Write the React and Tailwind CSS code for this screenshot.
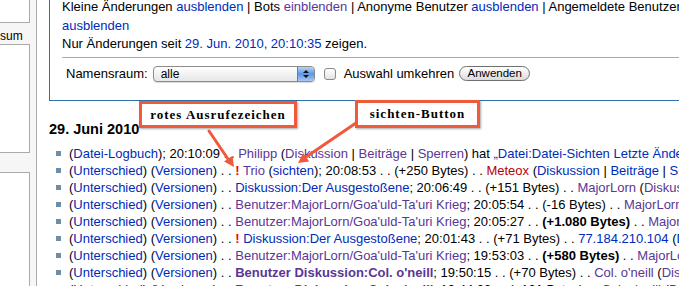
import React from "react";

// link colours (monobook)
const B = ({ children, className = "" }) => (
  <span className={`text-[#002bb8] ${className}`}>{children}</span>
);
const V = ({ children, className = "" }) => (
  <span className={`text-[#5a3696] ${className}`}>{children}</span>
);
const R = ({ children }) => <span className="text-[#ba0000]">{children}</span>;
const Bang = () => <span className="font-bold text-[#ff0000]">!</span>;

function Row({ children }) {
  return (
    <li className="flex items-start h-[17px]">
      <span className="mt-[6px] ml-[19px] mr-[8px] h-[5px] w-[5px] shrink-0 bg-[#6f8ea6]" />
      <span className="whitespace-nowrap">{children}</span>
    </li>
  );
}

const Diff = () => (
  <>
    (<B>Unterschied</B>) (<B>Versionen</B>) . .{" "}
  </>
);

function Sidebar() {
  return (
    <div className="w-[36px] shrink-0 bg-[#f6f6f6]">
      <div className="h-[23px] w-[30px] border-r border-b border-[#aaa] bg-white" />
      <div className="h-[21px] pt-[6px] text-[12px] leading-[14px] text-black">sum</div>
      <div className="h-[109px] w-[30px] border-t border-r border-b border-[#aaa] bg-white" />
      <div className="mt-[19px] h-[140px] w-[30px] border-t border-r border-[#aaa] bg-white" />
    </div>
  );
}

function Filters() {
  return (
    <div className="w-[700px] border-l border-b border-[#2f6fab] pl-[12px] pb-[18px]">
      <div className="-mt-[2px] leading-[18.5px] whitespace-nowrap">
        <div>
          Kleine Änderungen <B>ausblenden</B> | Bots <V>einblenden</V> | Anonyme
          Benutzer <B>ausblenden</B> | Angemeldete Benutzer
        </div>
        <div>
          <B>ausblenden</B>
        </div>
        <div>
          Nur Änderungen seit <B>29. Jun. 2010, 20:10:35</B> zeigen.
        </div>
      </div>
      <div className="mt-[3px] h-px bg-[#aaa]" />
      <div className="mt-[8px] flex items-center pl-[4px] h-[16px] whitespace-nowrap">
        <span>Namensraum:</span>
        <div className="ml-[5px] flex h-[16px] w-[162px] overflow-hidden rounded-[4px] border border-[#8c8c8c] bg-linear-to-b from-white to-[#e6e6e6] shadow-[0_1px_1px_rgba(0,0,0,0.15)]">
          <span className="flex-1 pl-[7px] text-[12px] leading-[15px]">alle</span>
          <span className="flex w-[17px] flex-col items-center justify-center gap-[2px] border-l border-[#5a7fb8] bg-linear-to-b from-[#b9d3f5] via-[#5d95e3] to-[#a9c8f3]">
            <svg width="6" height="3" viewBox="0 0 6 3">
              <path d="M0 3 L3 0 L6 3 Z" fill="#111" />
            </svg>
            <svg width="6" height="3" viewBox="0 0 6 3">
              <path d="M0 0 L3 3 L6 0 Z" fill="#111" />
            </svg>
          </span>
        </div>
        <span className="ml-[9px] h-[12px] w-[12px] rounded-[3px] border border-[#8a8a8a] bg-linear-to-b from-white to-[#e4e4e4]" />
        <span className="ml-[8px]">Auswahl umkehren</span>
        <span className="ml-[5px] flex h-[15px] w-[71px] items-center justify-center rounded-full border border-[#707070] bg-linear-to-b from-white to-[#dcdcdc] text-[11.5px] leading-[13px]">
          Anwenden
        </span>
      </div>
    </div>
  );
}

function Changes() {
  return (
    <ul className="-ml-[12px] mt-[6px] leading-[17px]">
      <Row>
        (<B>Datei-Logbuch</B>); 20:10:09 . . <V>Philipp</V> (<V>Diskussion</V> |{" "}
        <V>Beiträge</V> | <V>Sperren</V>) hat{" "}
        <B>„Datei:Datei-Sichten Letzte Änderungen.png“</B> hochgeladen
      </Row>
      <Row>
        <Diff />
        <Bang /> <V>Trio</V> (<B>sichten</B>); 20:08:53 . . (+250 Bytes) . .{" "}
        <R>Meteox</R> (<B>Diskussion</B> | <B>Beiträge</B> | <B>Sperren</B>)
      </Row>
      <Row>
        <Diff />
        <B>Diskussion:Der Ausgestoßene</B>; 20:06:49 . . (+151 Bytes) . .{" "}
        <V>MajorLorn</V> (<V>Diskussion</V> | <V>Beiträge</V>)
      </Row>
      <Row>
        <Diff />
        <V>Benutzer:MajorLorn/Goa'uld-Ta'uri Krieg</V>; 20:05:54 . . (-16 Bytes) . .{" "}
        <V>MajorLorn</V> (<V>Diskussion</V>)
      </Row>
      <Row>
        <Diff />
        <V>Benutzer:MajorLorn/Goa'uld-Ta'uri Krieg</V>; 20:05:27 . .{" "}
        <b>(+1.080 Bytes)</b> . . <V>MajorLorn</V> (<V>Diskussion</V>)
      </Row>
      <Row>
        <Diff />
        <Bang /> <B>Diskussion:Der Ausgestoßene</B>; 20:01:43 . . (+71 Bytes) . .{" "}
        <B>77.184.210.104</B> (<B>Diskussion</B>)
      </Row>
      <Row>
        <Diff />
        <V>Benutzer:MajorLorn/Goa'uld-Ta'uri Krieg</V>; 19:53:03 . .{" "}
        <b>(+580 Bytes)</b> . . <V>MajorLorn</V> (<V>Diskussion</V>)
      </Row>
      <Row>
        <Diff />
        <V className="font-bold">Benutzer Diskussion:Col. o'neill</V>; 19:50:15 . . (+70
        Bytes) . . <V>Col. o'neill</V> (<V>Diskussion</V>)
      </Row>
      <Row>
        <Diff />
        <V className="font-bold">Benutzer Diskussion:Col. o'neill</V>; 19:44:03 . . (+101
        Bytes) . . <V>Col. o'neill</V> (<V>Diskussion</V>)
      </Row>
    </ul>
  );
}

function Callout({ className, children }) {
  return (
    <div
      className={`absolute flex items-center justify-center border-[3px] border-[#ef5a3c] bg-white font-['Liberation_Serif',serif] text-[13px] font-bold tracking-[1px] text-black shadow-[1px_1px_2px_rgba(0,0,0,0.35)] ${className}`}
    >
      {children}
    </div>
  );
}

export default function App() {
  return (
    <div className="relative flex h-[286px] w-[679px] overflow-hidden bg-white font-['Liberation_Sans',Arial,sans-serif] text-[13px] text-black">
      <Sidebar />
      <div className="flex-1 border-l border-[#aaa] bg-white pl-[12px]">
        <Filters />
        <h2 className="mt-[18px] text-[14.5px] font-bold leading-[20px]">29. Juni 2010</h2>
        <Changes />
      </div>

      {/* annotations */}
      <Callout className="left-[139px] top-[101px] h-[27px] w-[158px]">
        rotes Ausrufezeichen
      </Callout>
      <Callout className="left-[355px] top-[100px] h-[28px] w-[125px]">
        sichten-Button
      </Callout>
      <svg className="pointer-events-none absolute left-0 top-0" width="679" height="286">
        <g stroke="#ef5a3c" strokeWidth="3" fill="#ef5a3c" strokeLinecap="round">
          <line x1="209" y1="131" x2="228" y2="159" />
          <path d="M234 167 L224 161.5 L232.5 155.8 Z" stroke="none" />
          <line x1="356" y1="123" x2="306" y2="157" />
          <path d="M298 163 L303.2 153 L309.2 161.6 Z" stroke="none" />
        </g>
      </svg>
    </div>
  );
}
